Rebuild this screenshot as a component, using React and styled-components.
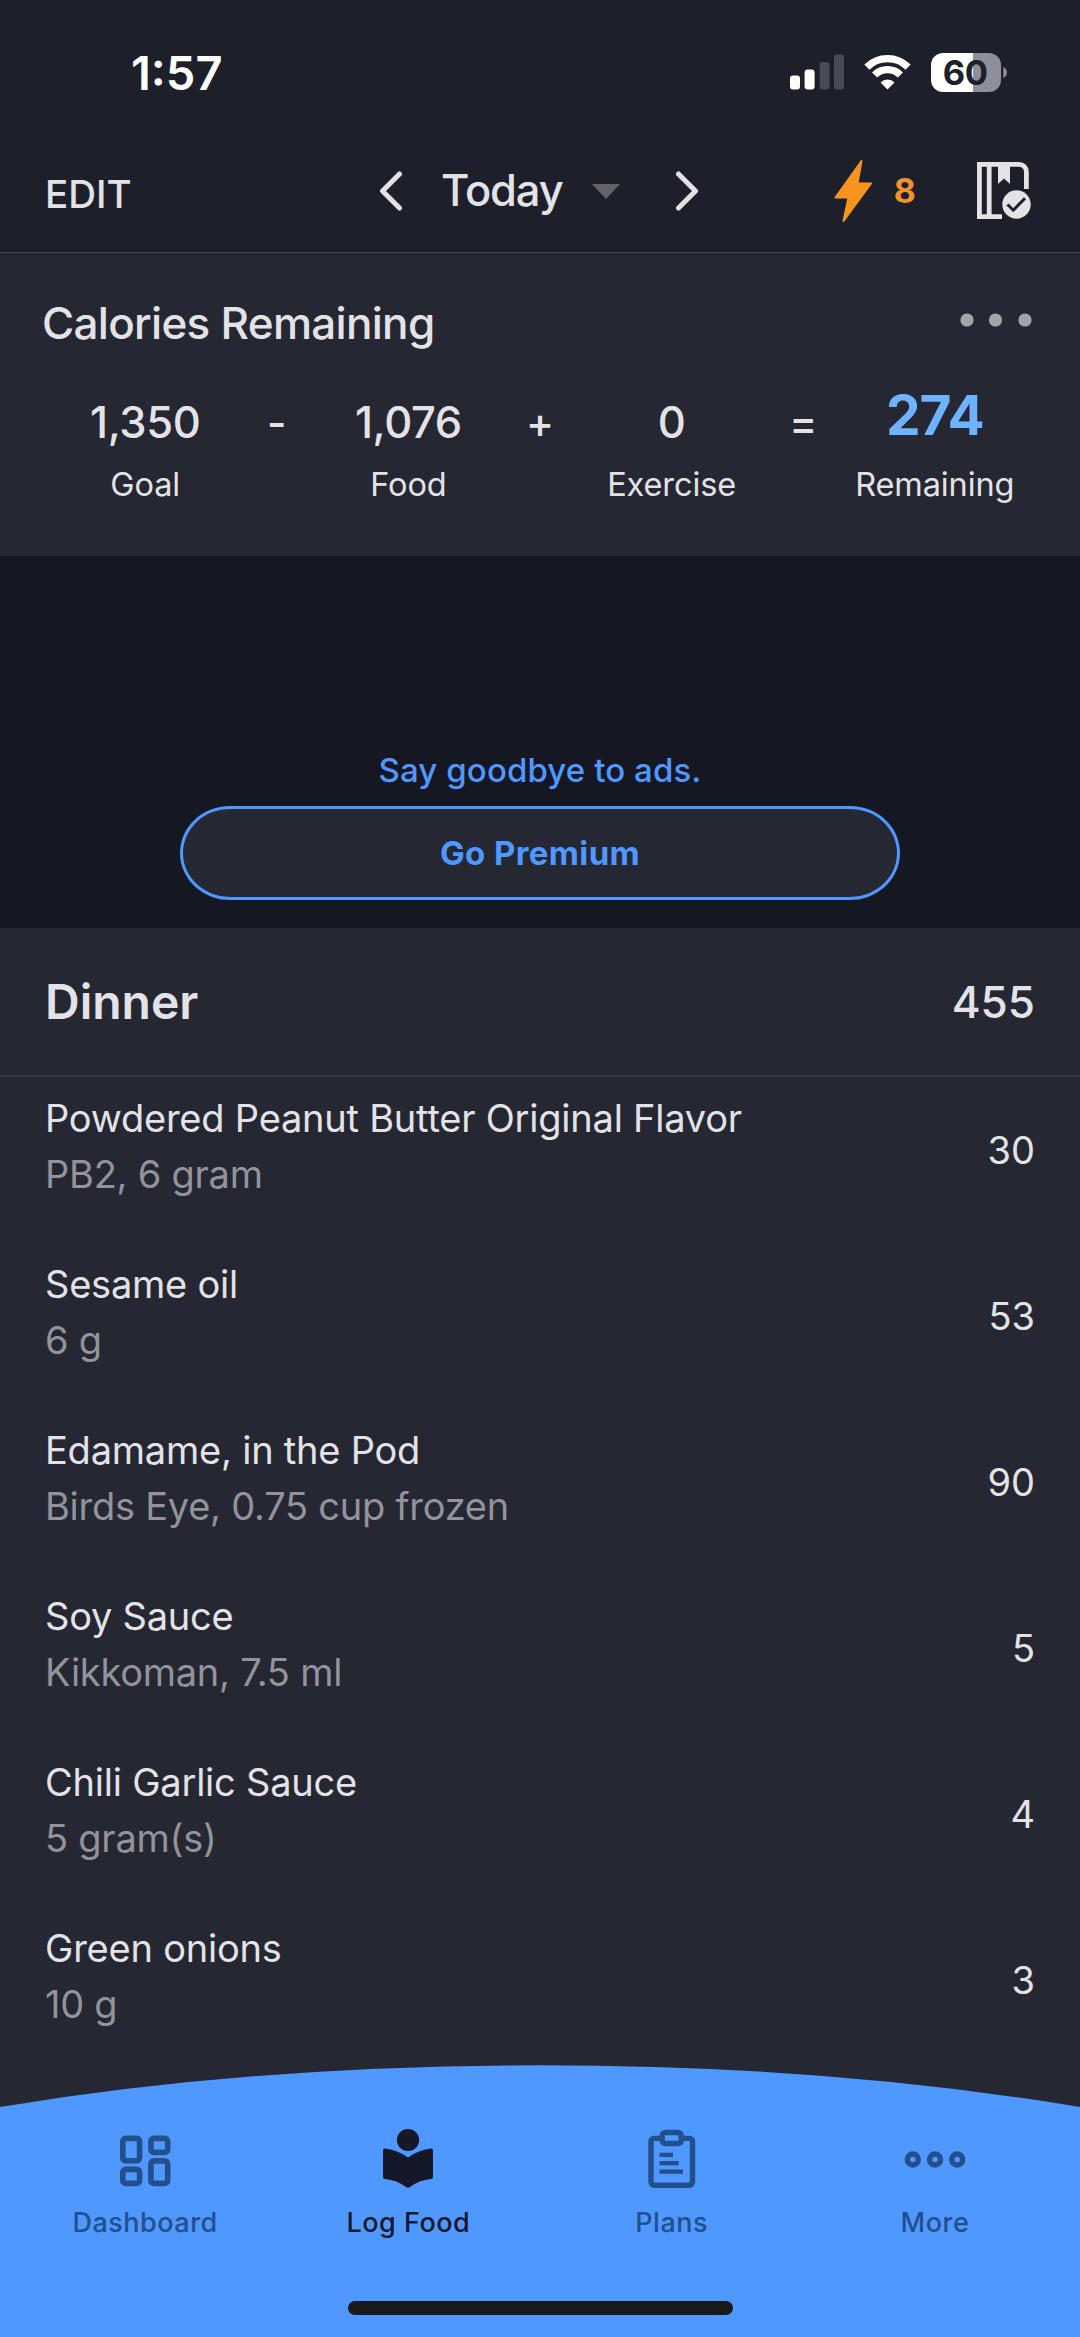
import React from "react";

//Importing styles
import styled, { createGlobalStyle } from 'styled-components'


const GlobalStyle = createGlobalStyle`
    * {
        box-sizing: border-box;
    }

    body {
        margin: 0;
        background: #252732;
        font-family: Inter, 'Liberation Sans', sans-serif;
        color: #e3e3e7;
    }
`;

// Styling components
const StyledScreen = styled.div`
    width: 1080px;
    height: 2337px;
    display: flex;
    flex-direction: column;
    overflow: hidden;
    background: #252732;
`;

const StyledText = styled.span`
    font-size: ${props => props.$size}px;
    font-weight: ${props => props.$weight || 400};
    letter-spacing: ${props => props.$spacing || 0}px;
    line-height: ${props => props.$line || props.$size}px;
    color: ${props => props.$color || 'inherit'};
    white-space: nowrap;
`;

const StyledTop = styled.header`
    height: 253px;
    flex: none;
    background: #1d1f2a;
    border-bottom: 1px solid #41434d;
`;

const StyledStatusBar = styled.div`
    height: 144px;
    padding: 0 72px 0 131px;
    display: flex;
    align-items: center;
    justify-content: space-between;

    .indicators {
        display: flex;
        align-items: center;
        gap: 20px;
    }
`;

const StyledNavBar = styled.div`
    height: 108px;
    padding: 0 49px 14px 45px;
    display: grid;
    grid-template-columns: 334px 322px 1fr;
    align-items: center;

    .edit {
        padding-top: 6px;
    }

    .date {
        display: flex;
        align-items: center;
    }

    .day {
        width: 151px;
        margin-left: 38px;
    }

    .next {
        display: flex;
        margin-left: 55px;
    }

    .streak {
        display: flex;
        align-items: center;
        justify-content: flex-end;
    }

    .bolt {
        margin-right: 22px;
    }

    .diary {
        margin-left: 61px;
    }
`;

const StyledSummary = styled.section`
    height: 303px;
    flex: none;
    padding: 44px 13px 0;

    .heading {
        height: 52px;
        padding: 0 35px 0 29px;
        display: flex;
        align-items: center;
        justify-content: space-between;
    }

    .menu {
        display: flex;
        padding-bottom: 7px;
    }

    .equation {
        margin-top: 41px;
        display: grid;
        grid-template-columns: repeat(7, 131.6px);
        justify-content: center;
        justify-items: center;
    }
`;

const StyledTerm = styled.div`
    display: flex;
    flex-direction: column;
    align-items: center;

    .number {
        height: 66px;
        display: flex;
        align-items: center;
        padding-bottom: ${props => props.$raised ? 15 : 0}px;
    }

    .label {
        height: 58px;
        display: flex;
        align-items: center;
    }
`;

const StyledAd = styled.section`
    height: 372px;
    flex: none;
    background: #151723;
    display: flex;
    flex-direction: column;
    align-items: center;
    justify-content: flex-end;
    padding-bottom: 28px;
    gap: 16px;
`;

const StyledPremiumButton = styled.button`
    width: 720px;
    height: 94px;
    border: 3px solid #4f98ff;
    border-radius: 50px / 47px;
    background: #252732;
    padding: 0;
    font-family: inherit;
    display: flex;
    align-items: center;
    justify-content: center;
`;

const StyledMealHeader = styled.div`
    height: 149px;
    flex: none;
    padding: 0 45px;
    border-bottom: 2px solid #32343e;
    display: flex;
    align-items: center;
    justify-content: space-between;
`;

const StyledFoodList = styled.ul`
    list-style: none;
    margin: 0;
    padding: 0;
    height: 988px;
    flex: none;
`;

const StyledFoodRow = styled.li`
    height: 166.1px;
    padding: 14px 45px 0;
    display: flex;
    justify-content: space-between;

    .names {
        display: flex;
        flex-direction: column;
    }

    .calories {
        padding-top: 32px;
    }
`;

const StyledTabBar = styled.nav`
    position: relative;
    flex: 1;
    padding: 52px 13.5px 0;
    display: grid;
    grid-template-columns: repeat(4, 1fr);
    align-items: start;

    /* the curved sheet lies behind the tabs */
    .curve {
        position: absolute;
        left: 0;
        bottom: 0;
    }

    .home {
        position: absolute;
        left: 348px;
        bottom: 22px;
        width: 385px;
        height: 14px;
        border-radius: 7px;
        background: #181a1b;
    }
`;

const StyledTab = styled.div`
    position: relative;
    display: flex;
    flex-direction: column;
    align-items: center;
    color: ${props => props.$active ? '#141828' : '#234f8c'};

    svg {
        display: block;
        margin-bottom: 13px;
    }
`;


// Status bar icons
const Signal = () => (
    <svg width="54" height="36" viewBox="0 0 54 36">
        <rect x="0" y="21.5" width="10" height="14" rx="3" fill="#fff" />
        <rect x="14.6" y="15.5" width="10" height="20" rx="3" fill="#fff" />
        <rect x="29.6" y="8" width="10" height="27.5" rx="3" fill="#484a55" />
        <rect x="44" y="0.5" width="10" height="35" rx="3" fill="#484a55" />
    </svg>
);

const Wifi = () => (
    <svg width="47" height="36" viewBox="0 0 47 36">
        <g fill="none" stroke="#fff" strokeWidth="7.2">
            <path d="M2.9 13.1a29.2 29.2 0 0 1 41.2 0" />
            <path d="M10.6 21a18.3 18.3 0 0 1 25.8 0" />
        </g>
        <path d="M23.5 35.5l-7-7.1a10 10 0 0 1 14 0z" fill="#fff" />
    </svg>
);

const Battery = () => (
    <svg width="77" height="39" viewBox="0 0 77 39">
        <path d="M12 0H42V39H12A12 12 0 0 1 0 27V12A12 12 0 0 1 12 0z" fill="#fff" />
        <path d="M42 0H58A12 12 0 0 1 70 12V27A12 12 0 0 1 58 39H42z" fill="#8e8f98" />
        <path d="M72.3 14a6 6 0 0 1 0 11z" fill="#8e8f98" />
        <text x="34.3" y="32" textAnchor="middle" fontSize="34.5" fontWeight="650" letterSpacing="-0.4" fontFamily="Inter, sans-serif" fill="#1d1f2a">60</text>
    </svg>
);

// Nav bar icons
const Chevron = ({ right }) => (
    <svg width="24" height="40" viewBox="0 0 24 40">
        <path d={right ? "M3.5 3L20.5 20L3.5 37" : "M20.5 3L3.5 20L20.5 37"} fill="none" stroke="#e3e3e7" strokeWidth="5" strokeLinecap="round" strokeLinejoin="round" />
    </svg>
);

const Caret = () => (
    <svg width="28" height="15" viewBox="0 0 28 15">
        <path d="M0 0H28L14 15z" fill="#626466" />
    </svg>
);

const Bolt = () => (
    <svg className="bolt" width="38" height="64" viewBox="0 0 38 64">
        <path d="M27.5 2L1.5 38.5H14.5L9.5 62L37 24.5H23.5z" fill="#f7941f" stroke="#f7941f" strokeWidth="2" strokeLinejoin="round" />
    </svg>
);

const Diary = () => (
    <svg className="diary" width="54" height="58" viewBox="0 0 54 58">
        <g fill="none" stroke="#e3e3e5" strokeWidth="4.8">
            <path d="M25 54.6H2.4V2.4H42a7.4 7.4 0 0 1 7.4 7.4V27" />
            <path d="M12.2 2V55" />
        </g>
        <path d="M21 2H33V22L27 16.5L21 22z" fill="#e3e3e5" />
        <circle cx="39.5" cy="42.5" r="17" fill="#1d1f2a" />
        <circle cx="39.5" cy="42.5" r="14.2" fill="#e3e3e5" />
        <path d="M30.5 42.5L36.3 48.2L48 36.2" fill="none" stroke="#1d1f2a" strokeWidth="3" />
    </svg>
);

const Dots = () => (
    <svg width="72" height="14" viewBox="0 0 72 14">
        {[7, 35.5, 65].map(x => <circle key={x} cx={x} cy="7" r="6.6" fill="#a3a3aa" />)}
    </svg>
);

// Tab icons
const DashboardIcon = () => (
    <svg width="64" height="72" viewBox="0 0 64 72">
        <g fill="none" stroke="currentColor" strokeWidth="5.6">
            <rect x="9.8" y="21.4" width="16.8" height="22.4" rx="3" />
            <rect x="37.9" y="21.4" width="16.8" height="14" rx="3" />
            <rect x="9.8" y="52.4" width="16.8" height="14" rx="3" />
            <rect x="37.9" y="43.9" width="16.8" height="22.5" rx="3" />
        </g>
    </svg>
);

const LogFoodIcon = () => (
    <svg width="64" height="72" viewBox="0 0 64 72">
        <circle cx="32" cy="23" r="11.1" fill="currentColor" />
        <path d="M7 33.5Q7 31.3 9.2 31.5Q22.5 33.3 32 40.5Q41.5 33.3 54.8 31.5Q57 31.3 57 33.5V60Q57 61.8 55 62Q43 63.2 34 70Q32 71.4 30 70Q21 63.2 9 62Q7 61.8 7 60z" fill="currentColor" />
    </svg>
);

const PlansIcon = () => (
    <svg width="64" height="72" viewBox="0 0 64 72">
        <g fill="none" stroke="currentColor" strokeWidth="5.4">
            <path d="M20 21.4H14a3 3 0 0 0-3 3V65.3a3 3 0 0 0 3 3H49.5a3 3 0 0 0 3-3V24.4a3 3 0 0 0-3-3H43.5" />
            <rect x="22.2" y="15.5" width="19" height="11" rx="3" />
        </g>
        <path d="M19.5 37.8H33M19.5 46.2H38.7M19.5 54.6H43" stroke="currentColor" strokeWidth="4.3" />
    </svg>
);

const MoreIcon = () => (
    <svg width="64" height="72" viewBox="0 0 64 72">
        {[9.8, 32, 54.2].map(x => <circle key={x} cx={x} cy="42.500" r="5.500" fill="none" stroke="currentColor" strokeWidth="5.400" />)}
    </svg>
);


const equation = [
    { value: '1,350', label: 'Goal' },
    { sign: '-' },
    { value: '1,076', label: 'Food' },
    { sign: '+' },
    { value: '0', label: 'Exercise' },
    { sign: '=' },
    { value: '274', label: 'Remaining', total: true },
];

const foods = [
    { name: 'Powdered Peanut Butter Original Flavor', detail: 'PB2, 6 gram', calories: 30 },
    { name: 'Sesame oil', detail: '6 g', calories: 53 },
    { name: 'Edamame, in the Pod', detail: 'Birds Eye, 0.75 cup frozen', calories: 90 },
    { name: 'Soy Sauce', detail: 'Kikkoman, 7.5 ml', calories: 5 },
    { name: 'Chili Garlic Sauce', detail: '5 gram(s)', calories: 4 },
    { name: 'Green onions', detail: '10 g', calories: 3 },
];

const tabs = [
    { label: 'Dashboard', Icon: DashboardIcon },
    { label: 'Log Food', Icon: LogFoodIcon, active: true },
    { label: 'Plans', Icon: PlansIcon },
    { label: 'More', Icon: MoreIcon },
];


// Top of the screen
function Header() {
    return (
        <StyledTop>
            <StyledStatusBar>
                <StyledText $size={47} $weight={600} $color='#fff'>1:57</StyledText>
                <div className='indicators'>
                    <Signal />
                    <Wifi />
                    <Battery />
                </div>
            </StyledStatusBar>
            <StyledNavBar>
                <div className='edit'>
                    <StyledText $size={38.5} $weight={500}>EDIT</StyledText>
                </div>
                <div className='date'>
                    <Chevron />
                    <div className='day'>
                        <StyledText $size={43.5} $weight={500} $spacing={-1.1}>Today</StyledText>
                    </div>
                    <Caret />
                    <div className='next'>
                        <Chevron right />
                    </div>
                </div>
                <div className='streak'>
                    <Bolt />
                    <StyledText $size={34} $weight={700} $color='#f0932c'>8</StyledText>
                    <Diary />
                </div>
            </StyledNavBar>
        </StyledTop>
    );
}

// Calories equation
function Summary() {
    return (
        <StyledSummary>
            <div className='heading'>
                <StyledText $size={44} $weight={500} $spacing={-0.7}>Calories Remaining</StyledText>
                <div className='menu'>
                    <Dots />
                </div>
            </div>
            <div className='equation'>
                {equation.map(({ sign, value, label, total }) => (
                    <StyledTerm key={sign || label} $raised={total}>
                        <div className='number'>
                            {total ?
                                <StyledText $size={55} $weight={700} $spacing={-1} $color='#6db3ff'>{value}</StyledText> :
                                <StyledText $size={sign ? 42 : 43.5} $weight={sign ? 450 : 500} $spacing={sign ? 0 : -0.4}>{sign || value}</StyledText>}
                        </div>
                        {label && <div className='label'><StyledText $size={32.5} $spacing={-0.1}>{label}</StyledText></div>}
                    </StyledTerm>
                ))}
            </div>
        </StyledSummary>
    );
}

// Export App
export default function App() {
    return (
        <StyledScreen>
            <GlobalStyle />
            <Header />
            <Summary />
            <StyledAd>
                <StyledText $size={33} $line={40} $weight={500} $spacing={0.1} $color='#4f98ff'>Say goodbye to ads.</StyledText>
                <StyledPremiumButton>
                    <StyledText $size={33} $weight={700} $spacing={0.4} $color='#4f98ff'>Go Premium</StyledText>
                </StyledPremiumButton>
            </StyledAd>
            <StyledMealHeader>
                <StyledText $size={48} $weight={600}>Dinner</StyledText>
                <StyledText $size={44} $weight={450}>455</StyledText>
            </StyledMealHeader>
            <StyledFoodList>
                {foods.map(food => (
                    <StyledFoodRow key={food.name}>
                        <div className='names'>
                            <StyledText $size={38} $line={55.5} $spacing={-0.22}>{food.name}</StyledText>
                            <StyledText $size={38} $line={54.5} $spacing={-0.25} $color='#92939c'>{food.detail}</StyledText>
                        </div>
                        <div className='calories'>
                            <StyledText $size={38} $line={55.5}>{food.calories}</StyledText>
                        </div>
                    </StyledFoodRow>
                ))}
            </StyledFoodList>
            <StyledTabBar>
                <svg className='curve' width="1080" height="272" viewBox="0 0 1080 272">
                    <path d="M0 42Q250 0.3 540 0.3T1080 42V272H0z" fill="#4f98ff" />
                </svg>
                {tabs.map(({ label, Icon, active }) => (
                    <StyledTab key={label} $active={active}>
                        <Icon />
                        <StyledText $size={27} $line={41} $weight={500} $spacing={0.5}>{label}</StyledText>
                    </StyledTab>
                ))}
                <div className='home' />
            </StyledTabBar>
        </StyledScreen>
    );
};
